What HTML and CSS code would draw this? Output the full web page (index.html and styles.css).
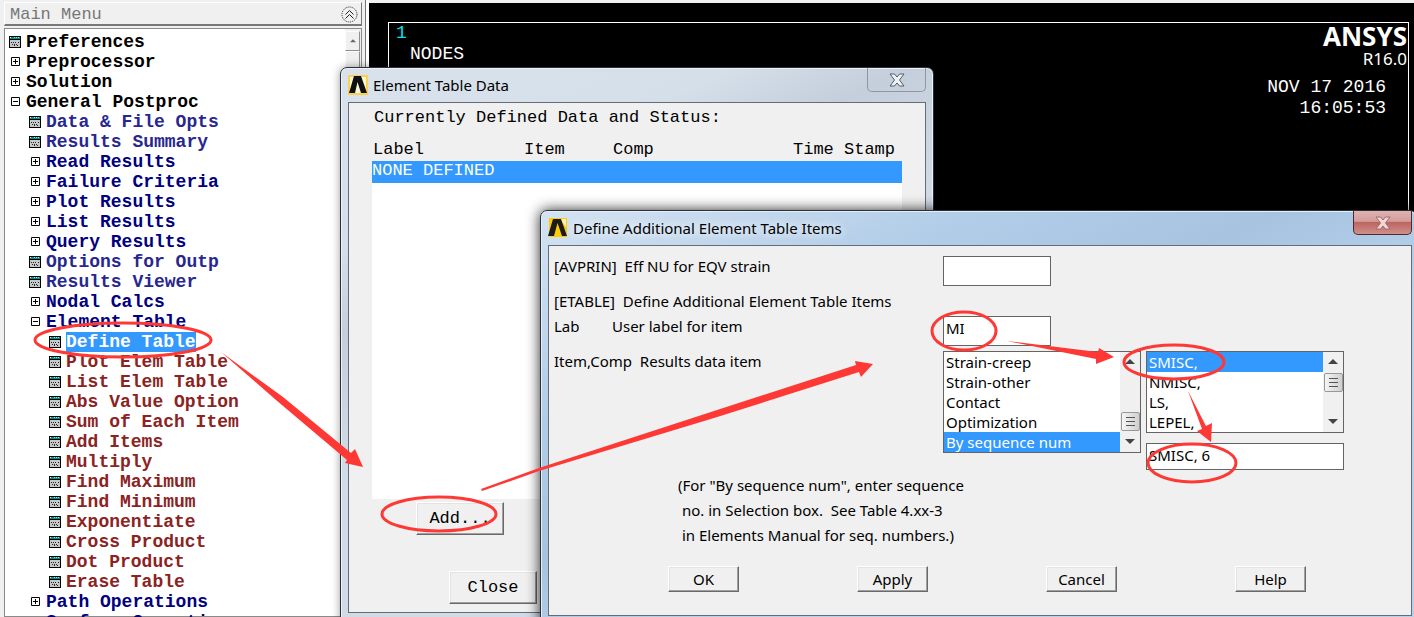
FILE: index.html
```html
<!DOCTYPE html>
<html lang="en">
<head>
<meta charset="utf-8">
<title>ANSYS - Element Table</title>
<link rel="stylesheet" href="styles.css">
</head>
<body>
<svg class="symbols" aria-hidden="true">
  <symbol id="leaf" viewBox="0 0 12 12">
    <path fill="#000" d="M0 0h12v12H0z"/>
    <path fill="#008c8c" d="M1 1h10v2H1z"/>
    <path fill="#5ff" d="M5 1h1v1H5zM7 1h1v1H7zM9 1h1v1H9z"/>
    <path fill="#ff6" d="M1 1h1v1H1z"/>
    <path fill="#c8c8c8" d="M1 4h10v7H1z"/>
    <path fill="#222" d="M2 6h1v1H2zM4 6h1v1H4zM6 6h1v1H6zM9 6h1v1H9zM3 8h1v1H3zM5 8h1v1H5zM7 8h1v1H7zM8 9h1v1H8zM5 9h1v1H5z"/>
  </symbol>
  <symbol id="plus" viewBox="0 0 12 12">
    <path fill="#fff" stroke="#000" d="M2.500 1.500h8v8h-8z"/><path stroke="#000" d="M4 5.500h5M6.500 3v5"/>
  </symbol>
  <symbol id="minus" viewBox="0 0 12 12">
    <path fill="#fff" stroke="#000" d="M2.500 1.500h8v8h-8z"/><path stroke="#000" d="M4 5.500h5"/>
  </symbol>
  <symbol id="up" viewBox="0 0 10 6"><path fill="#444" d="M5 0l5 5H0z"/></symbol>
  <symbol id="down" viewBox="0 0 10 6"><path fill="#444" d="M0 0h10L5 5z"/></symbol>
  <symbol id="cross" viewBox="0 0 16 14">
    <path d="M1 1h4.500L8 4l2.500-3H15l-4.500 6L15 13h-4.500L8 10l-2.500 3H1l4.500-6z"/>
  </symbol>
</svg>

<div class="desktop">
  <aside class="sidebar">
    <header class="menu-head">
      <span>Main Menu</span>
      <button class="collapse" aria-label="Collapse menu">
        <svg width="17" height="17" viewBox="0 0 17 17" fill="none" stroke="#222"><circle cx="8.500" cy="8.500" r="7.500" stroke-dasharray="1 1"/><path d="M4.500 8.500l4-4 4 4M4.500 12.500l4-4 4 4"/></svg>
      </button>
    </header>
    <div class="tree-panel">
      <ul class="tree">
        <li><button class="node root"><svg><use href="#leaf"/></svg>Preferences</button></li>
        <li><button class="node root"><svg><use href="#plus"/></svg>Preprocessor</button></li>
        <li><button class="node root"><svg><use href="#plus"/></svg>Solution</button></li>
        <li><button class="node root"><svg><use href="#minus"/></svg>General Postproc</button>
          <ul>
            <li><button class="node cmd"><svg><use href="#leaf"/></svg>Data &amp; File Opts</button></li>
            <li><button class="node cmd"><svg><use href="#leaf"/></svg>Results Summary</button></li>
            <li><button class="node"><svg><use href="#plus"/></svg>Read Results</button></li>
            <li><button class="node"><svg><use href="#plus"/></svg>Failure Criteria</button></li>
            <li><button class="node"><svg><use href="#plus"/></svg>Plot Results</button></li>
            <li><button class="node"><svg><use href="#plus"/></svg>List Results</button></li>
            <li><button class="node"><svg><use href="#plus"/></svg>Query Results</button></li>
            <li><button class="node cmd"><svg><use href="#leaf"/></svg>Options for Outp</button></li>
            <li><button class="node cmd"><svg><use href="#leaf"/></svg>Results Viewer</button></li>
            <li><button class="node"><svg><use href="#plus"/></svg>Nodal Calcs</button></li>
            <li><button class="node"><svg><use href="#minus"/></svg>Element Table</button>
              <ul>
                <li><button class="node deep"><svg><use href="#leaf"/></svg><span class="current">Define Table</span></button></li>
                <li><button class="node deep"><svg><use href="#leaf"/></svg>Plot Elem Table</button></li>
                <li><button class="node deep"><svg><use href="#leaf"/></svg>List Elem Table</button></li>
                <li><button class="node deep"><svg><use href="#leaf"/></svg>Abs Value Option</button></li>
                <li><button class="node deep"><svg><use href="#leaf"/></svg>Sum of Each Item</button></li>
                <li><button class="node deep"><svg><use href="#leaf"/></svg>Add Items</button></li>
                <li><button class="node deep"><svg><use href="#leaf"/></svg>Multiply</button></li>
                <li><button class="node deep"><svg><use href="#leaf"/></svg>Find Maximum</button></li>
                <li><button class="node deep"><svg><use href="#leaf"/></svg>Find Minimum</button></li>
                <li><button class="node deep"><svg><use href="#leaf"/></svg>Exponentiate</button></li>
                <li><button class="node deep"><svg><use href="#leaf"/></svg>Cross Product</button></li>
                <li><button class="node deep"><svg><use href="#leaf"/></svg>Dot Product</button></li>
                <li><button class="node deep"><svg><use href="#leaf"/></svg>Erase Table</button></li>
              </ul>
            </li>
            <li><button class="node"><svg><use href="#plus"/></svg>Path Operations</button></li>
            <li><button class="node"><svg><use href="#plus"/></svg>Surface Operations</button></li>
          </ul>
        </li>
      </ul>
      <div class="tree-scroll">
        <button class="tree-up" aria-label="Scroll up"><svg width="6" height="4"><use href="#up"/></svg></button>
        <div class="tree-thumb"></div>
      </div>
    </div>
  </aside>

  <main class="graphics">
    <div class="viewport">
      <div class="plot-title">
        <span class="plot-number">1</span>
        <span class="plot-kind">NODES</span>
      </div>
      <div class="stamp">
        <strong class="brand">ANSYS</strong>
        <span class="release">R16.0</span>
        <span class="time">NOV 17 2016</span>
        <span class="time">16:05:53</span>
      </div>
    </div>
  </main>

  <section class="window data-window">
    <header class="title-bar">
      <svg class="app-icon" viewBox="0 0 20 20"><path fill="#fbd34a" d="M0 0h20v20H0z"/><path fill="#fff" d="M2 2h16v16H2z" opacity=".8"/><path fill="#111" d="M1 18L6 1h7l6 17h-6L9.500 7 7 18z"/></svg>
      <h2>Element Table Data</h2>
      <button class="close" aria-label="Close window"><svg width="16" height="14" fill="#eef2f6" stroke="#555b6a"><use href="#cross"/></svg></button>
    </header>
    <div class="pane data-pane">
      <p class="caption">Currently Defined Data and Status:</p>
      <label class="columns" for="defined"><span>Label</span><span>Item</span><span>Comp</span><span>Time Stamp</span></label>
      <select class="defined" id="defined" size="15"><option selected>NONE DEFINED</option></select>
      <button class="push wide add">Add...</button>
      <button class="push wide done">Close</button>
    </div>
  </section>

  <section class="window items-window">
    <header class="title-bar">
      <svg class="app-icon" viewBox="0 0 20 20"><path fill="#ffcb05" d="M1 0h18v19H1z"/><path fill="#fff3b0" d="M12 1h6v8z"/><path fill="#1c1c1c" d="M0 18L5 1h8l6 17h-5L9.500 5 6 18z"/></svg>
      <h2>Define Additional Element Table Items</h2>
      <button class="close" aria-label="Close window"><svg width="16" height="14" fill="#f1d5d3" stroke="#a06d6d"><use href="#cross"/></svg></button>
    </header>
    <form class="pane items-pane">
      <div class="form">
        <label for="nu">[AVPRIN]  Eff NU for EQV strain</label>
        <input class="field" id="nu" type="text">
        <p class="group">[ETABLE]  Define Additional Element Table Items</p>
        <label for="lab"><span class="key">Lab</span>User label for item</label>
        <input class="field" id="lab" type="text" value="MI">
        <label for="item">Item,Comp  Results data item</label>
        <div class="pickers">
          <div class="listbox">
            <select id="item" size="5">
              <option>Strain-creep</option><option>Strain-other</option><option>Contact</option><option>Optimization</option><option selected>By sequence num</option>
            </select>
            <div class="scroll">
              <button type="button" aria-label="Scroll up"><svg width="10" height="6"><use href="#up"/></svg></button>
              <div class="track end"><i class="thumb"></i></div>
              <button type="button" aria-label="Scroll down"><svg width="10" height="6"><use href="#down"/></svg></button>
            </div>
          </div>
          <div class="component">
            <div class="listbox">
              <select aria-label="Component" size="4">
                <option selected>SMISC,</option><option>NMISC,</option><option>LS,</option><option>LEPEL,</option>
              </select>
              <div class="scroll">
                <button type="button" aria-label="Scroll up"><svg width="10" height="6"><use href="#up"/></svg></button>
                <div class="track"><i class="thumb"></i></div>
                <button type="button" aria-label="Scroll down"><svg width="10" height="6"><use href="#down"/></svg></button>
              </div>
            </div>
            <input class="field selection" type="text" aria-label="Selection" value="SMISC, 6">
          </div>
        </div>
      </div>
      <p class="note">(For "By sequence num", enter sequence
 no. in Selection box.  See Table 4.xx-3
 in Elements Manual for seq. numbers.)</p>
      <div class="actions">
        <button type="button" class="push">OK</button>
        <button type="button" class="push">Apply</button>
        <button type="button" class="push">Cancel</button>
        <button type="button" class="push">Help</button>
      </div>
    </form>
  </section>

  <svg class="marks" width="1414" height="617" viewBox="0 0 1414 617" aria-hidden="true">
    <g fill="none" stroke="#fe3835" stroke-width="3">
      <ellipse cx="123" cy="340" rx="88" ry="17"/>
      <ellipse cx="439" cy="514" rx="57" ry="17"/>
      <ellipse cx="964" cy="331" rx="32" ry="19"/>
      <ellipse cx="1174" cy="362" rx="50" ry="17"/>
      <ellipse cx="1192" cy="463" rx="44" ry="19"/>
    </g>
    <g fill="#fe3835">
      <path d="M221 352L283 397 351 453 355 449 363 467 345 463 347 460 276 400z"/>
      <path d="M481 489L539 468 714 411 856 365 855 361 873 364 861 377 859 372 714 418 539 471 482 491z"/>
      <path d="M1007 341L1098 352 1099 348 1114 357 1096 364 1096 359z"/>
      <path d="M1188 391L1206 426 1212 423 1211 442 1197 431 1202 429z"/>
    </g>
  </svg>
</div>
</body>
</html>
```
FILE: styles.css
```css
* { box-sizing: border-box; }
body { margin: 0; background: #f0f0f0; color: #000; font-family: "Noto Sans", "Open Sans", sans-serif; font-size: 15px; }
button { margin: 0; padding: 0; border: 0; background: none; font: inherit; color: inherit; }
h2, p, ul { margin: 0; padding: 0; font-weight: normal; }
ul { list-style: none; }
.symbols { display: none; }

.desktop { position: relative; display: flex; height: 100vh; overflow: hidden; }

/* Main menu */
.sidebar { width: 369px; padding: 2px 7px 0 4px; display: flex; flex-direction: column; gap: 2px; font-family: "Liberation Mono", monospace; box-shadow: inset -3px 0 #fff, inset -4px 0 #777; }
.menu-head { height: 24px; padding: 2px 3px 0 5px; display: flex; align-items: center; justify-content: space-between; border: 1px solid; border-color: #fff #777 #777 #fff; border-bottom-width: 2px; color: #777; font-size: 17px; }
.collapse { width: 17px; height: 19px; }
.collapse svg { display: block; }
.tree-panel { flex: 1; min-height: 0; display: flex; border: 1px solid #8a8a8a; background: #fff; }
.tree { flex: 1; padding: 3px 0 0 4px; }
.tree ul { padding-left: 20px; }
.node { display: flex; align-items: center; gap: 5px; height: 20px; color: #000080; font-size: 18px; font-weight: bold; white-space: nowrap; }
.node svg { width: 12px; height: 12px; flex: none; }
.node.root { color: #000; }
.node.cmd { color: #27278f; }
.node.deep { color: #8b2323; }
.current { background: #3399ff; color: #fff; line-height: 20px; }
.tree-scroll { width: 16px; padding-top: 2px; background: #f0f0f0; }
.tree-up, .tree-thumb { display: flex; align-items: center; justify-content: center; width: 15px; height: 20px; border: 1px solid; border-color: #fff #777 #777 #fff; opacity: .8; }
.tree-thumb { height: 60px; }

/* Graphics area */
.graphics { flex: 1; display: flex; margin-top: 3px; padding: 19px 5px 0 19px; background: #000; color: #fff; font-family: "Liberation Mono", monospace; font-size: 18px; line-height: 21px; }
.viewport { flex: 1; display: flex; justify-content: space-between; border: 1px solid #fff; border-bottom: 0; }
.plot-title { display: flex; flex-direction: column; padding-left: 7px; }
.plot-number { color: #00e5ee; }
.plot-kind { padding-left: 14px; }
.stamp { display: flex; flex-direction: column; align-items: flex-end; padding-right: 1px; }
.brand, .release { font-family: "Noto Sans", sans-serif; }
.brand { font-size: 26px; line-height: 27px; }
.release { font-size: 17px; line-height: 18px; margin-bottom: 9px; }
.time { margin-right: 21px; }

/* Windows */
.window { position: absolute; display: flex; flex-direction: column; border: 1px solid #2b3036; border-radius: 7px 7px 0 0; }
.title-bar { display: flex; align-items: center; height: 34px; gap: 5px; }
.title-bar h2 { flex: 1; font-size: 15px; line-height: 24px; }
.app-icon { width: 20px; height: 20px; }
.close { align-self: flex-start; display: flex; align-items: center; justify-content: center; width: 59px; height: 24px; border: 1px solid #8e96a5; border-top: 0; border-radius: 0 0 5px 5px; }
.pane { border: 1px solid #666c75; background: #f0f0f0; }
.data-window { left: 340px; top: 67px; width: 594px; height: 555px; padding: 0 7px; background: linear-gradient(155deg, #d9e2ec 0%, #d5dfea 22%, #c4cfdb 32%, #d2dce7 50%, #cfdae6 100%); box-shadow: inset 0 0 0 1px #eaf1f8, 0 0 8px rgba(0, 0, 0, .4); }
.items-window { left: 540px; right: -3px; top: 210px; padding: 0 4px 8px 7px; background: linear-gradient(155deg, #d4e3f2 0%, #b2cde8 25%, #a7c3e0 42%, #b5d2ee 60%, #b5d1ec 100%); box-shadow: inset 0 0 0 1px #e3effa, 0 0 14px rgba(0, 0, 0, .85); }
.items-window h2 { text-shadow: 0 0 8px #eef5fc, 0 0 8px #eef5fc; }
.items-window .close { border-color: #4d2a30; background: linear-gradient(#dfb2b2 0%, #d39c9b 45%, #bd6560 50%, #cf8f8b 100%); }

.data-pane { height: 511px; display: flex; flex-direction: column; align-items: flex-start; padding: 4px 23px 0; font-family: "Liberation Mono", monospace; font-size: 17px; }
.caption { padding-left: 2px; line-height: 22px; }
.columns { display: grid; grid-template-columns: 151px 89px 180px 1fr; align-self: stretch; margin-top: 10px; padding-left: 1px; line-height: 22px; white-space: nowrap; }
.defined { align-self: stretch; height: 338px; }

select { appearance: none; display: block; margin: 0; padding: 0; border: 0; border-radius: 0; outline: 0; overflow: hidden; background: #fff; color: #000; font: inherit; }
option { min-height: 20px; padding: 0 0 0 2px; line-height: 20px; }
option:checked { background: #3399ff linear-gradient(#3399ff, #3399ff); color: #fff; }
.defined option { height: 22px; padding: 0; line-height: 22px; }

.push { width: 71px; height: 26px; padding-bottom: 1px; border: 1px solid; border-color: #fff #696969 #696969 #fff; box-shadow: inset -1px -1px #a0a0a0, inset 1px 1px #e3e3e3; background: #f0f0f0; font-size: 15px; }
.push.wide { width: 88px; height: 33px; font-size: 17px; }
.add { margin: 3px 0 0 44px; }
.done { margin: 36px 0 0 77px; }

.items-pane { padding-top: 10px; }
.form { display: grid; grid-template-columns: 394px 1fr; grid-template-rows: 35px 25px 35px auto; align-items: start; line-height: 20px; }
.form label, .group { padding-left: 5px; white-space: pre; }
.group { grid-column: 1 / 3; }
.key { display: inline-block; width: 58px; }
.field { width: 108px; height: 30px; padding: 0 2px 6px; border: 1px solid #646464; border-radius: 0; outline: 0; background: #fff; color: #000; font: inherit; }
.pickers { display: flex; align-items: flex-start; gap: 5px; }
.component { display: flex; flex-direction: column; gap: 10px; }
.listbox { display: flex; width: 198px; border: 1px solid #646464; background: #fff; }
.listbox select { flex: 1; min-width: 0; }
.scroll { display: flex; flex-direction: column; width: 20px; background: #f0f0f0; }
.scroll button { display: flex; align-items: center; justify-content: center; height: 20px; }
.track { flex: 1; display: flex; flex-direction: column; align-items: center; padding: 1px 0; }
.track.end { justify-content: flex-end; }
.thumb { width: 19px; height: 19px; border: 1px solid #989898; border-radius: 2px; background: repeating-linear-gradient(#555 0 1px, transparent 1px 4px) center / 9px 9px no-repeat, linear-gradient(90deg, #f5f5f5, #cfcfcf); }
.field.selection { width: 198px; height: 27px; padding-bottom: 4px; }
.note { margin-top: 3px; padding-left: 129px; line-height: 25px; white-space: pre; }
.actions { display: flex; justify-content: space-around; margin-top: 18px; padding: 0 46px 23px 60px; }

/* Hand-drawn callouts over the windows */
.marks { position: absolute; left: 0; top: 0; pointer-events: none; }
```
